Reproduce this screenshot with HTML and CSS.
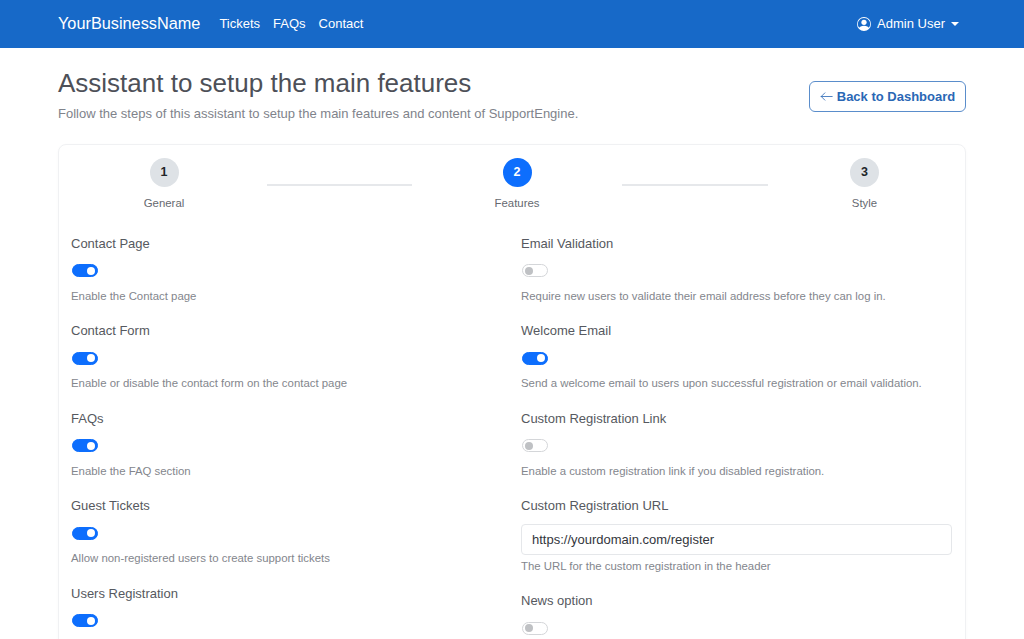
FILE: index.html
```html
<!DOCTYPE html>
<html lang="en">
<head>
<meta charset="utf-8">
<title>Setup Assistant</title>
<link rel="stylesheet" href="styles.css">
</head>
<body>
<header class="navbar">
  <div class="nav-left">
    <a class="brand">YourBusinessName</a>
    <nav class="nav-links"><a>Tickets</a><a>FAQs</a><a>Contact</a></nav>
  </div>
  <div class="user">
    <svg class="user-icon" viewBox="0 0 16 16" width="14" height="14" aria-hidden="true"><path fill="currentColor" d="M11 6a3 3 0 1 1-6 0 3 3 0 0 1 6 0"/><path fill="currentColor" fill-rule="evenodd" d="M0 8a8 8 0 1 1 16 0A8 8 0 0 1 0 8m8-7a7 7 0 0 0-5.468 11.37C3.242 11.226 4.805 10 8 10s4.757 1.225 5.468 2.37A7 7 0 0 0 8 1"/></svg>
    <span>Admin User</span>
    <span class="caret"></span>
  </div>
</header>
<main class="page">
  <div class="page-head">
    <div>
      <h1>Assistant to setup the main features</h1>
      <p class="lead">Follow the steps of this assistant to setup the main features and content of SupportEngine.</p>
    </div>
    <a class="back-btn"><svg viewBox="0 0 16 16" width="13" height="13" aria-hidden="true"><path fill="none" stroke="currentColor" stroke-width="1" stroke-linecap="round" stroke-linejoin="round" d="M15 8H1.5M6 3.5 1.5 8 6 12.5"/></svg>Back to Dashboard</a>
  </div>
  <section class="card">
    <div class="steps">
      <div class="step step-a"><span class="dot">1</span><span class="step-name">General</span></div>
      <div class="line"></div>
      <div class="step step-b"><span class="dot dot-active">2</span><span class="step-name">Features</span></div>
      <div class="line line-b"></div>
      <div class="step step-c"><span class="dot">3</span><span class="step-name">Style</span></div>
    </div>
    <div class="form-grid">
      <div class="col">
        <div class="group"><label>Contact Page</label><span class="toggle on"></span><p class="help">Enable the Contact page</p></div>
        <div class="group"><label>Contact Form</label><span class="toggle on"></span><p class="help">Enable or disable the contact form on the contact page</p></div>
        <div class="group"><label>FAQs</label><span class="toggle on"></span><p class="help">Enable the FAQ section</p></div>
        <div class="group"><label>Guest Tickets</label><span class="toggle on"></span><p class="help">Allow non-registered users to create support tickets</p></div>
        <div class="group"><label>Users Registration</label><span class="toggle on"></span></div>
      </div>
      <div class="col">
        <div class="group"><label>Email Validation</label><span class="toggle"></span><p class="help">Require new users to validate their email address before they can log in.</p></div>
        <div class="group"><label>Welcome Email</label><span class="toggle on"></span><p class="help">Send a welcome email to users upon successful registration or email validation.</p></div>
        <div class="group"><label>Custom Registration Link</label><span class="toggle"></span><p class="help">Enable a custom registration link if you disabled registration.</p></div>
        <div class="group"><label>Custom Registration URL</label><input class="input" type="text" value="https://yourdomain.com/register"><p class="help help-tight">The URL for the custom registration in the header</p></div>
        <div class="group"><label>News option</label><span class="toggle"></span></div>
      </div>
    </div>
  </section>
</main>
</body>
</html>
```
FILE: styles.css
```css
* { box-sizing: border-box; }
html, body { margin: 0; height: 639px; overflow: hidden; background: #fff; }
body { font-family: "Liberation Sans", Arial, sans-serif; color: #4a4d55; }

.navbar { height: 48px; background: #1769c8; color: #fff; display: flex; justify-content: space-between; align-items: center; padding: 0 65px 1px 58px; }
.nav-left { display: flex; align-items: center; gap: 19px; }
.brand { font-size: 16.3px; }
.nav-links { display: flex; gap: 13px; font-size: 13px; }
.user { display: flex; align-items: center; font-size: 13px; }
.user-icon { margin-right: 6px; }
.caret { margin-left: 6px; border: 4px solid transparent; border-top-color: #fff; border-bottom: 0; }

.page { padding: 0 58px; }
.page-head { display: flex; justify-content: space-between; align-items: flex-start; padding-top: 18px; height: 96px; }
h1 { margin: 0; font-size: 26px; font-weight: 400; line-height: 34px; color: #4d5058; }
.lead { margin: 5px 0 0; font-size: 13px; line-height: 18px; color: #80838b; }
.back-btn { margin-top: 15px; width: 157px; height: 31px; display: flex; align-items: center; justify-content: center; gap: 4px; border: 1px solid #5a8dcb; border-radius: 6px; color: #2a67b5; font-size: 13px; font-weight: 700; }

.card { border: 1px solid #f0f1f3; border-radius: 8px; padding: 12.5px 12px 40px; box-shadow: 0 1px 3px rgba(0,0,0,.03); }
.steps { display: flex; height: 75px; }
.step { display: flex; flex-direction: column; align-items: center; }
.step-a { width: 186px; }
.step-b { width: 190px; }
.step-c { width: 173px; }
.dot { width: 29px; height: 29px; border-radius: 50%; background: #dee2e6; color: #212529; font-size: 12.5px; font-weight: 700; display: flex; align-items: center; justify-content: center; }
.dot-active { background: #0d6efd; color: #fff; }
.step-name { margin-top: 8px; font-size: 11.4px; line-height: 16px; color: #666970; }
.line { width: 145px; height: 2px; margin: 26px 10px 0; background: #e6e8eb; }
.line-b { width: 146px; }

.form-grid { display: grid; grid-template-columns: 431px 431px; column-gap: 19px; }
.group { display: block; margin-bottom: 15.5px; }
.group label { display: block; font-size: 13px; line-height: 21px; color: #565960; }
.toggle { display: block; position: relative; width: 26px; height: 13px; margin: 10.5px 0 0 0.5px; border: 1px solid #d4d6d9; border-radius: 7px; background: #fff; }
.toggle::after { content: ""; position: absolute; left: 2px; top: 1.5px; width: 8px; height: 8px; border-radius: 50%; background: #bfc1c4; }
.toggle.on { background: #0d6efd; border-color: #0d6efd; }
.toggle.on::after { left: auto; right: 2px; background: #fff; }
.help { margin: 10.5px 0 0; font-size: 11.4px; line-height: 17px; color: #83868d; }
.help-tight { margin-top: 2.5px; }
.input { display: block; width: 100%; height: 31px; margin-top: 8px; padding: 0 10px; border: 1px solid #e5e7ea; border-radius: 4px; font: 13px "Liberation Sans", Arial, sans-serif; color: #33363c; background: #fff; }
```
